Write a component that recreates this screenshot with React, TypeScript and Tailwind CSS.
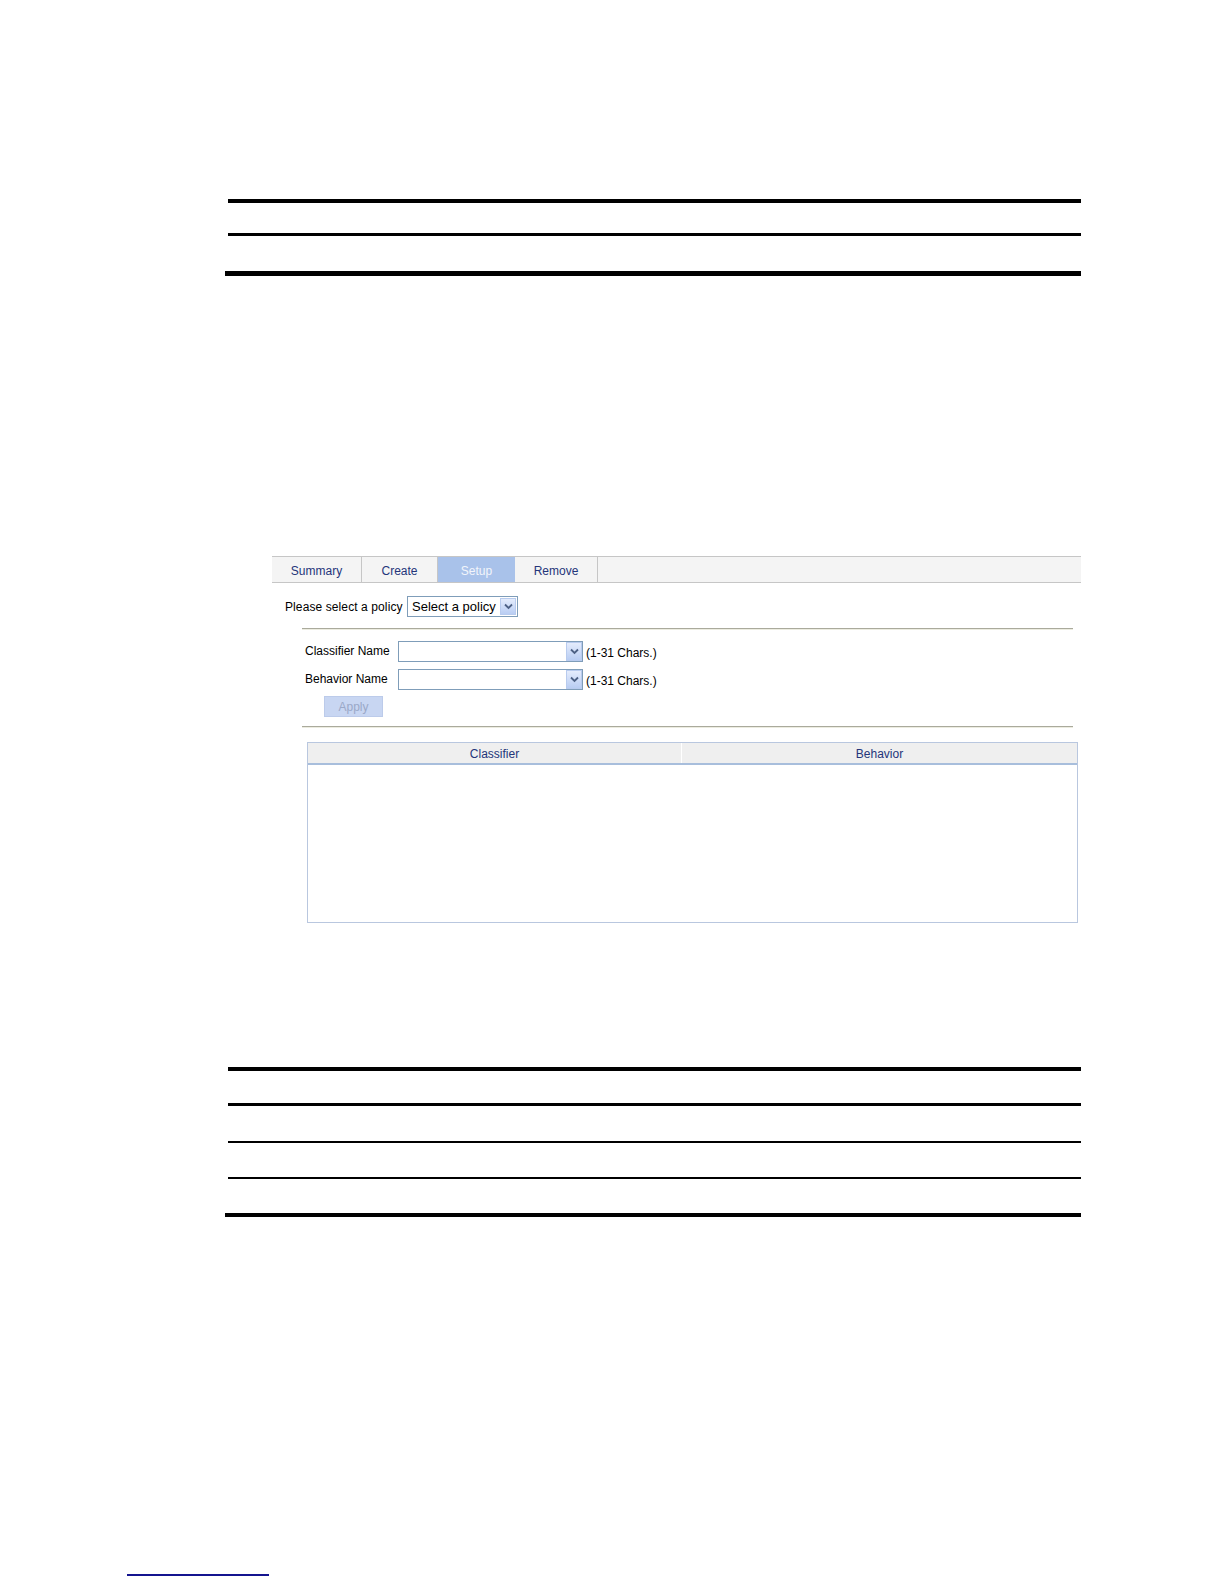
import React from "react";

function Chevron() {
  return (
    <div className="w-[16px] h-full border border-[#b8cbee] bg-gradient-to-b from-[#e4ecfc] to-[#b9cdf3] flex items-center justify-center">
      <svg width="9" height="7" viewBox="0 0 9 7">
        <path d="M1 1.5 L4.5 5 L8 1.5" fill="none" stroke="#4d6185" strokeWidth="1.8" />
      </svg>
    </div>
  );
}

function Combo() {
  return (
    <div className="flex h-[21px] w-[185px] border border-[#7f9db9] bg-white">
      <div className="flex-1" />
      <Chevron />
    </div>
  );
}

export default function App() {
  const font = { fontFamily: '"Liberation Sans", Arial, sans-serif' };
  return (
    <div className="w-[1224px] h-[1584px] bg-white flex flex-col overflow-hidden" style={font}>
      {/* top table lines */}
      <div className="mt-[199px] ml-[228px] w-[853px] h-[4px] bg-black shrink-0" />
      <div className="mt-[30px] ml-[228px] w-[853px] h-[3px] bg-black shrink-0" />
      <div className="mt-[35px] ml-[225px] w-[856px] h-[5px] bg-black shrink-0" />

      {/* panel */}
      <div className="mt-[280px] ml-[272px] w-[809px] flex flex-col shrink-0">
        {/* tabs */}
        <div className="flex h-[27px] bg-[#f4f4f4] border-t border-b border-[#c6c6c6] text-[12px] text-[#24357a]">
          <div className="w-[90px] flex items-center justify-center border-r border-[#c6c6c6] pt-[2px]">Summary</div>
          <div className="w-[76px] flex items-center justify-center border-r border-[#c6c6c6] pt-[2px]">Create</div>
          <div className="w-[77px] flex items-center justify-center bg-[#a9c2ea] text-[#f2f5fb] pt-[2px]">Setup</div>
          <div className="w-[83px] flex items-center justify-center border-r border-[#c6c6c6] pt-[2px]">Remove</div>
          <div className="flex-1" />
        </div>

        {/* policy select */}
        <div className="flex items-center mt-[13px] ml-[13px] h-[21px]">
          <span className="w-[122px] text-[12px] text-black tracking-[0.1px]">Please select a policy</span>
          <div className="flex h-[21px] w-[111px] border border-[#7f9db9] bg-white items-center">
            <span className="flex-1 pl-[4px] text-[13px] text-black">Select a policy</span>
            <div className="h-[17px] mr-[1px]">
              <Chevron />
            </div>
          </div>
        </div>

        <div className="mt-[11px] ml-[30px] w-[771px] h-[2px] bg-[#aaaa9c] border-b border-[#ecece0]" />

        {/* form */}
        <div className="flex items-center mt-[10px] ml-[33px]">
          <span className="w-[93px] text-[12px] text-black">Classifier Name</span>
          <Combo />
          <span className="ml-[3px] mt-[4px] text-[12px] text-black">(1-31 Chars.)</span>
        </div>
        <div className="flex items-center mt-[6px] ml-[33px]">
          <span className="w-[93px] text-[12px] text-black">Behavior Name</span>
          <Combo />
          <span className="ml-[3px] mt-[4px] text-[12px] text-black">(1-31 Chars.)</span>
        </div>
        <div className="mt-[6px] ml-[52px] w-[59px] h-[21px] bg-[#c8d6f2] border border-[#bccbea] flex items-center justify-center text-[12px] text-[#9aa8c8]">
          Apply
        </div>

        <div className="mt-[9px] ml-[30px] w-[771px] h-[2px] bg-[#aaaa9c] border-b border-[#ecece0]" />

        {/* table */}
        <div className="mt-[14px] ml-[35px] w-[771px] h-[181px] border border-[#b9c7df] flex flex-col">
          <div className="flex h-[22px] bg-[#efefef] border-b-2 border-[#a8bedc] text-[12px] text-[#24357a]">
            <div className="w-[374px] flex items-center justify-center border-r border-white pt-[2px]">Classifier</div>
            <div className="flex-1 flex items-center justify-center pt-[2px]">Behavior</div>
          </div>
          <div className="flex-1 bg-white" />
        </div>
      </div>

      {/* bottom table lines */}
      <div className="mt-[144px] ml-[228px] w-[853px] h-[4px] bg-black shrink-0" />
      <div className="mt-[32px] ml-[228px] w-[853px] h-[3px] bg-black shrink-0" />
      <div className="mt-[35px] ml-[228px] w-[853px] h-[2px] bg-black shrink-0" />
      <div className="mt-[34px] ml-[228px] w-[853px] h-[2px] bg-black shrink-0" />
      <div className="mt-[34px] ml-[225px] w-[856px] h-[4px] bg-black shrink-0" />

      {/* footnote rule */}
      <div className="mt-[357px] ml-[127px] w-[142px] h-[2px] bg-[#14148f] shrink-0" />
    </div>
  );
}
